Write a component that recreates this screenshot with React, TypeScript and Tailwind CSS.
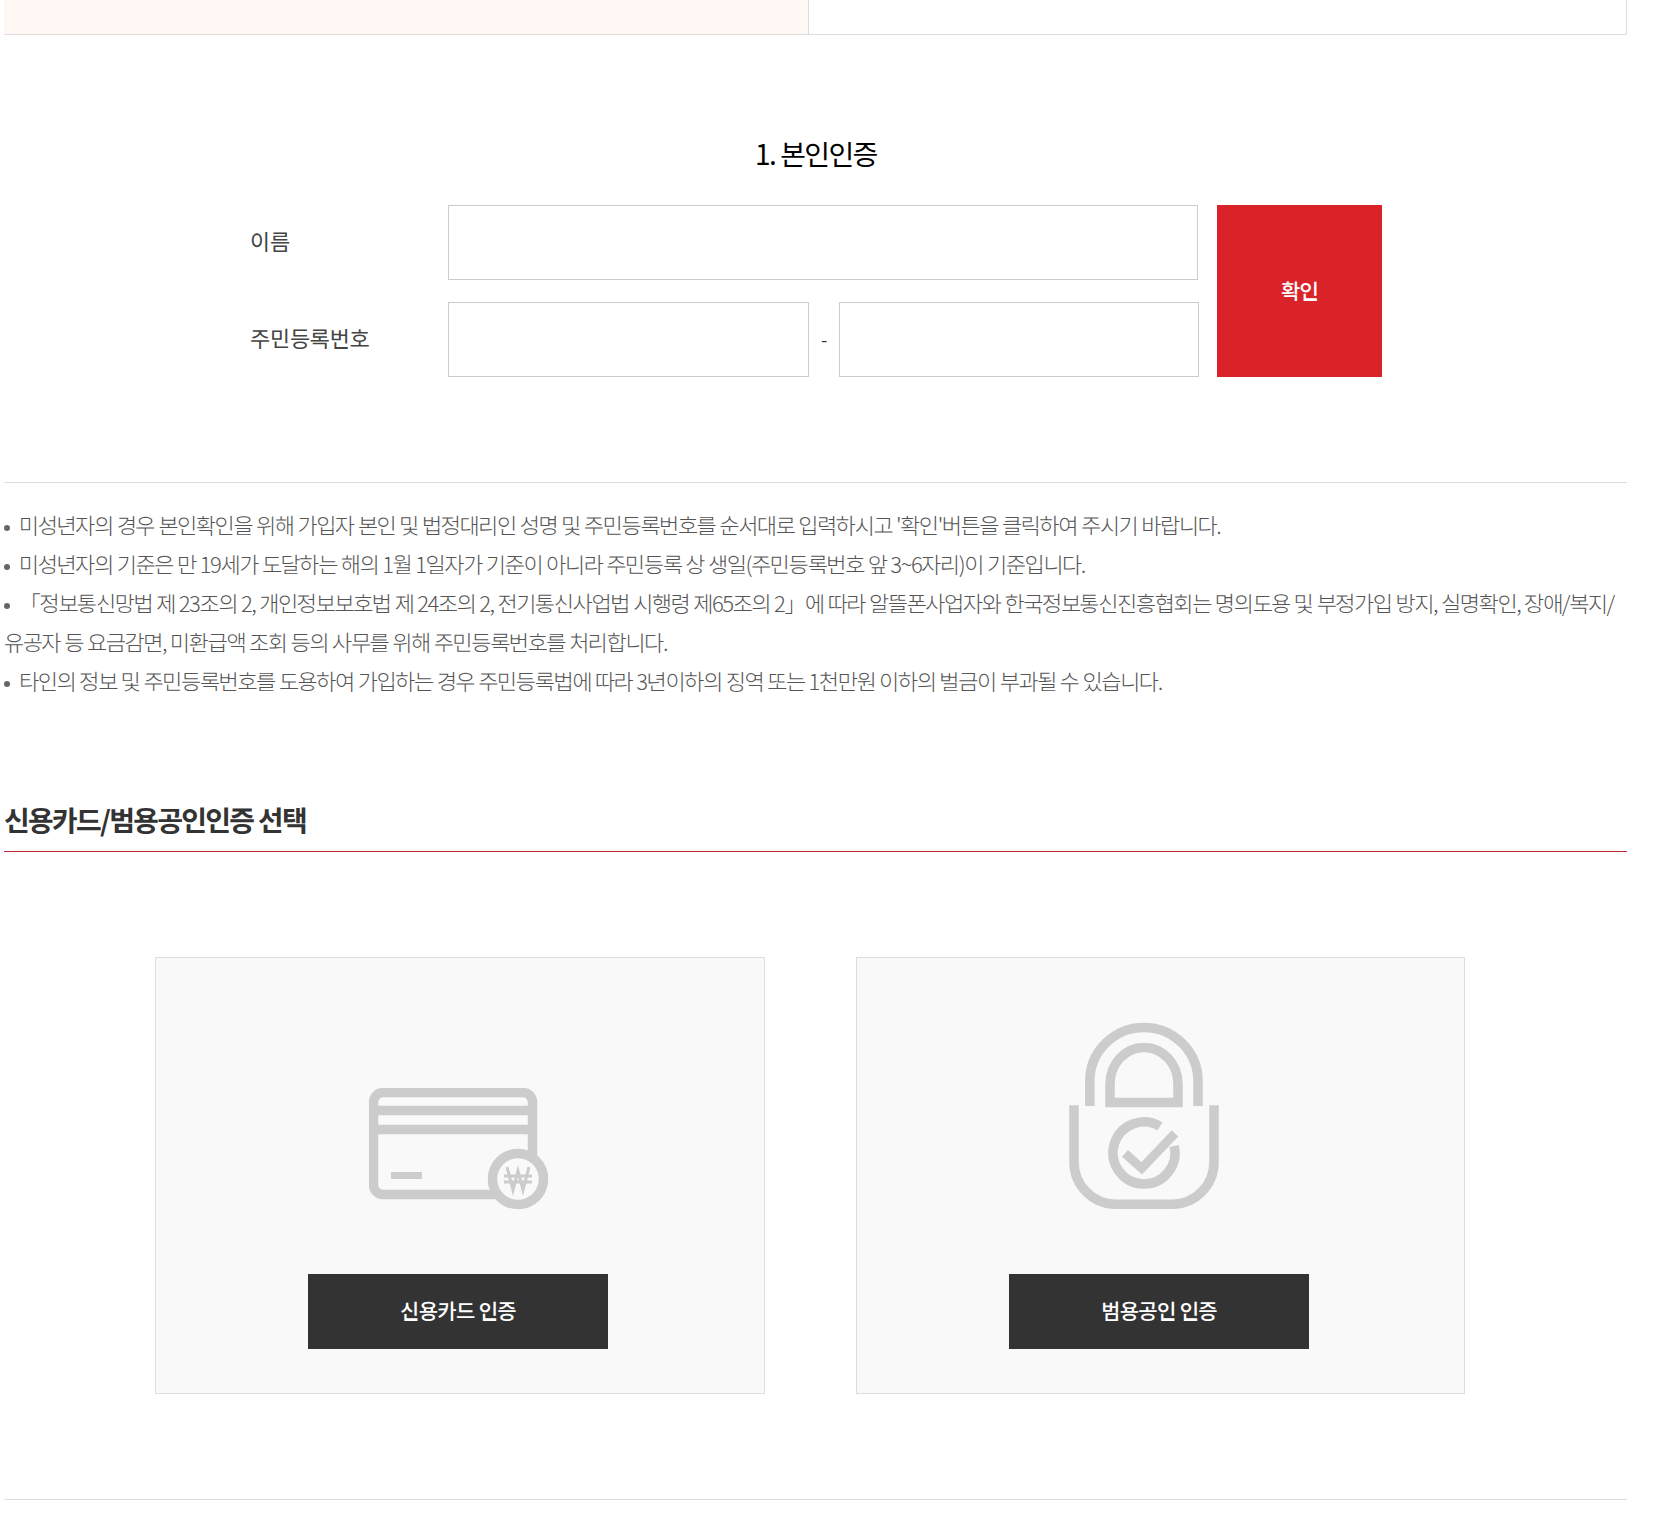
const font = "font-['Noto_Sans_KR','Noto_Sans_CJK_KR',sans-serif]";

function Bullet() {
  return <span className="inline-block w-[6px] h-[6px] rounded-full bg-[#666] mr-[9px] align-middle" />;
}

function CardIcon() {
  return (
    <svg width="180" height="122" viewBox="0 0 180 122" fill="none" className="block blur-[0.6px]">
      <g stroke="#cccccc" strokeWidth="9.500">
        <path d="M4.500 14a9.500 9.500 0 0 1 9.500-9.500h140a9.500 9.500 0 0 1 9.500 9.500v83a9.500 9.500 0 0 1-9.500 9.500h-140a9.500 9.500 0 0 1-9.500-9.500z" />
        <path d="M5 22.500h158M5 41.500h158" />
      </g>
      <path d="M22 87.500h31" stroke="#cccccc" strokeWidth="7" />
      <circle cx="149" cy="91" r="25.500" fill="#f9f9f9" stroke="#cccccc" strokeWidth="9.500" />
      <g stroke="#cccccc" strokeWidth="3" fill="none">
        <path d="M138 79l6 23 5-19 5 19 6-23" />
        <path d="M135 88h28M135 94h28" />
      </g>
    </svg>
  );
}

function LockIcon() {
  return (
    <svg width="150" height="188" viewBox="0 0 150 188" fill="none" className="block blur-[0.6px]">
      <g stroke="#cccccc" strokeWidth="9.500">
        <path d="M20.800 84V59.400a54.100 54 0 0 1 108.200 0V84" />
        <path d="M41 80.600V62a34 36.600 0 0 1 68 0v18.600H41z" />
        <path d="M5 83.300V140a42 42.300 0 0 0 42 42.300h56a42 42.300 0 0 0 42-42.300V83.300" />
        <path d="M91 104.400A31 31 0 1 0 105.200 124" />
      </g>
      <path d="M56 131.300l16.700 15L106 111.300" stroke="#cccccc" strokeWidth="9" />
    </svg>
  );
}

function AuthCard({ label, className, children }: { label: string; className: string; children: React.ReactNode }) {
  return (
    <div className={`h-[437px] bg-[#f9f9f9] border border-[#dddddd] flex flex-col ${className}`}>
      <div className="h-[316px] relative">{children}</div>
      <button className="self-start ml-[152px] w-[300px] h-[75px] pb-[2px] bg-[#333333] text-white text-[21px] tracking-[-0.7px] font-medium flex items-center justify-center">
        {label}
      </button>
    </div>
  );
}

export default function App() {
  return (
    <div className={`${font} w-[1660px] h-[1531px] bg-white pl-[4px] overflow-hidden`}>
      <div className="w-[1623px]">
        <div className="flex h-[35px] border-b border-[#dddddd]">
          <div className="w-[805px] bg-[#fff8f5] border-r border-[#dddddd]" />
          <div className="flex-1 border-r border-[#dddddd]" />
        </div>

        <h2 className="mt-[98px] h-[40px] leading-[40px] text-center text-[28px] tracking-[-1.5px] font-normal text-black ml-[1px]">1. 본인인증</h2>

        <div className="mt-[32px] flex h-[172px]">
          <div className="w-[444px] flex flex-col pl-[246px] text-[22px] text-[#444] tracking-[-0.3px]">
            <div className="h-[75px] pb-[4px] flex items-center">이름</div>
            <div className="mt-[22px] h-[75px] pb-[4px] flex items-center">주민등록번호</div>
          </div>
          <div className="w-[751px] flex flex-col gap-[22px]">
            <div className="h-[75px] w-[750px] border border-[#cccccc]" />
            <div className="h-[75px] flex items-center">
              <div className="w-[361px] h-full border border-[#cccccc]" />
              <span className="w-[30px] text-center text-[18px] text-[#333]">-</span>
              <div className="w-[360px] h-full border border-[#cccccc]" />
            </div>
          </div>
          <button className="ml-[18px] w-[165px] h-[172px] pb-[1px] bg-[#da2329] text-white text-[21px] tracking-[-0.7px] font-medium">확인</button>
        </div>

        <div className="mt-[105px] border-t border-[#dddddd] pt-[22px] text-[22px] leading-[39px] font-light text-[#555] tracking-[-1.46px] [word-spacing:0.5px]">
          <p><Bullet />미성년자의 경우 본인확인을 위해 가입자 본인 및 법정대리인 성명 및 주민등록번호를 순서대로 입력하시고 '확인'버튼을 클릭하여 주시기 바랍니다.</p>
          <p><Bullet />미성년자의 기준은 만 19세가 도달하는 해의 1월 1일자가 기준이 아니라 주민등록 상 생일(주민등록번호 앞 3~6자리)이 기준입니다.</p>
          <p><Bullet />「정보통신망법 제 23조의 2, 개인정보보호법 제 24조의 2, 전기통신사업법 시행령 제65조의 2」에 따라 알뜰폰사업자와 한국정보통신진흥협회는 명의도용 및 부정가입 방지, 실명확인, 장애/복지/유공자 등 요금감면, 미환급액 조회 등의 사무를 위해 주민등록번호를 처리합니다.</p>
          <p><Bullet />타인의 정보 및 주민등록번호를 도용하여 가입하는 경우 주민등록법에 따라 3년이하의 징역 또는 1천만원 이하의 벌금이 부과될 수 있습니다.</p>
        </div>

        <h3 className="mt-[102px] h-[50px] leading-[34px] border-b border-[#c0272d] text-[28px] font-bold text-[#333] tracking-[-1.75px]">
          신용카드/범용공인인증 선택
        </h3>

        <div className="mt-[105px] pl-[151px] flex gap-[91px]">
          <AuthCard label="신용카드 인증" className="w-[610px]">
            <div className="absolute left-[213px] top-[130px]"><CardIcon /></div>
          </AuthCard>
          <AuthCard label="범용공인 인증" className="w-[609px]">
            <div className="absolute left-[212px] top-[64px]"><LockIcon /></div>
          </AuthCard>
        </div>

        <div className="mt-[105px] border-t border-[#dddddd]" />
      </div>
    </div>
  );
}
